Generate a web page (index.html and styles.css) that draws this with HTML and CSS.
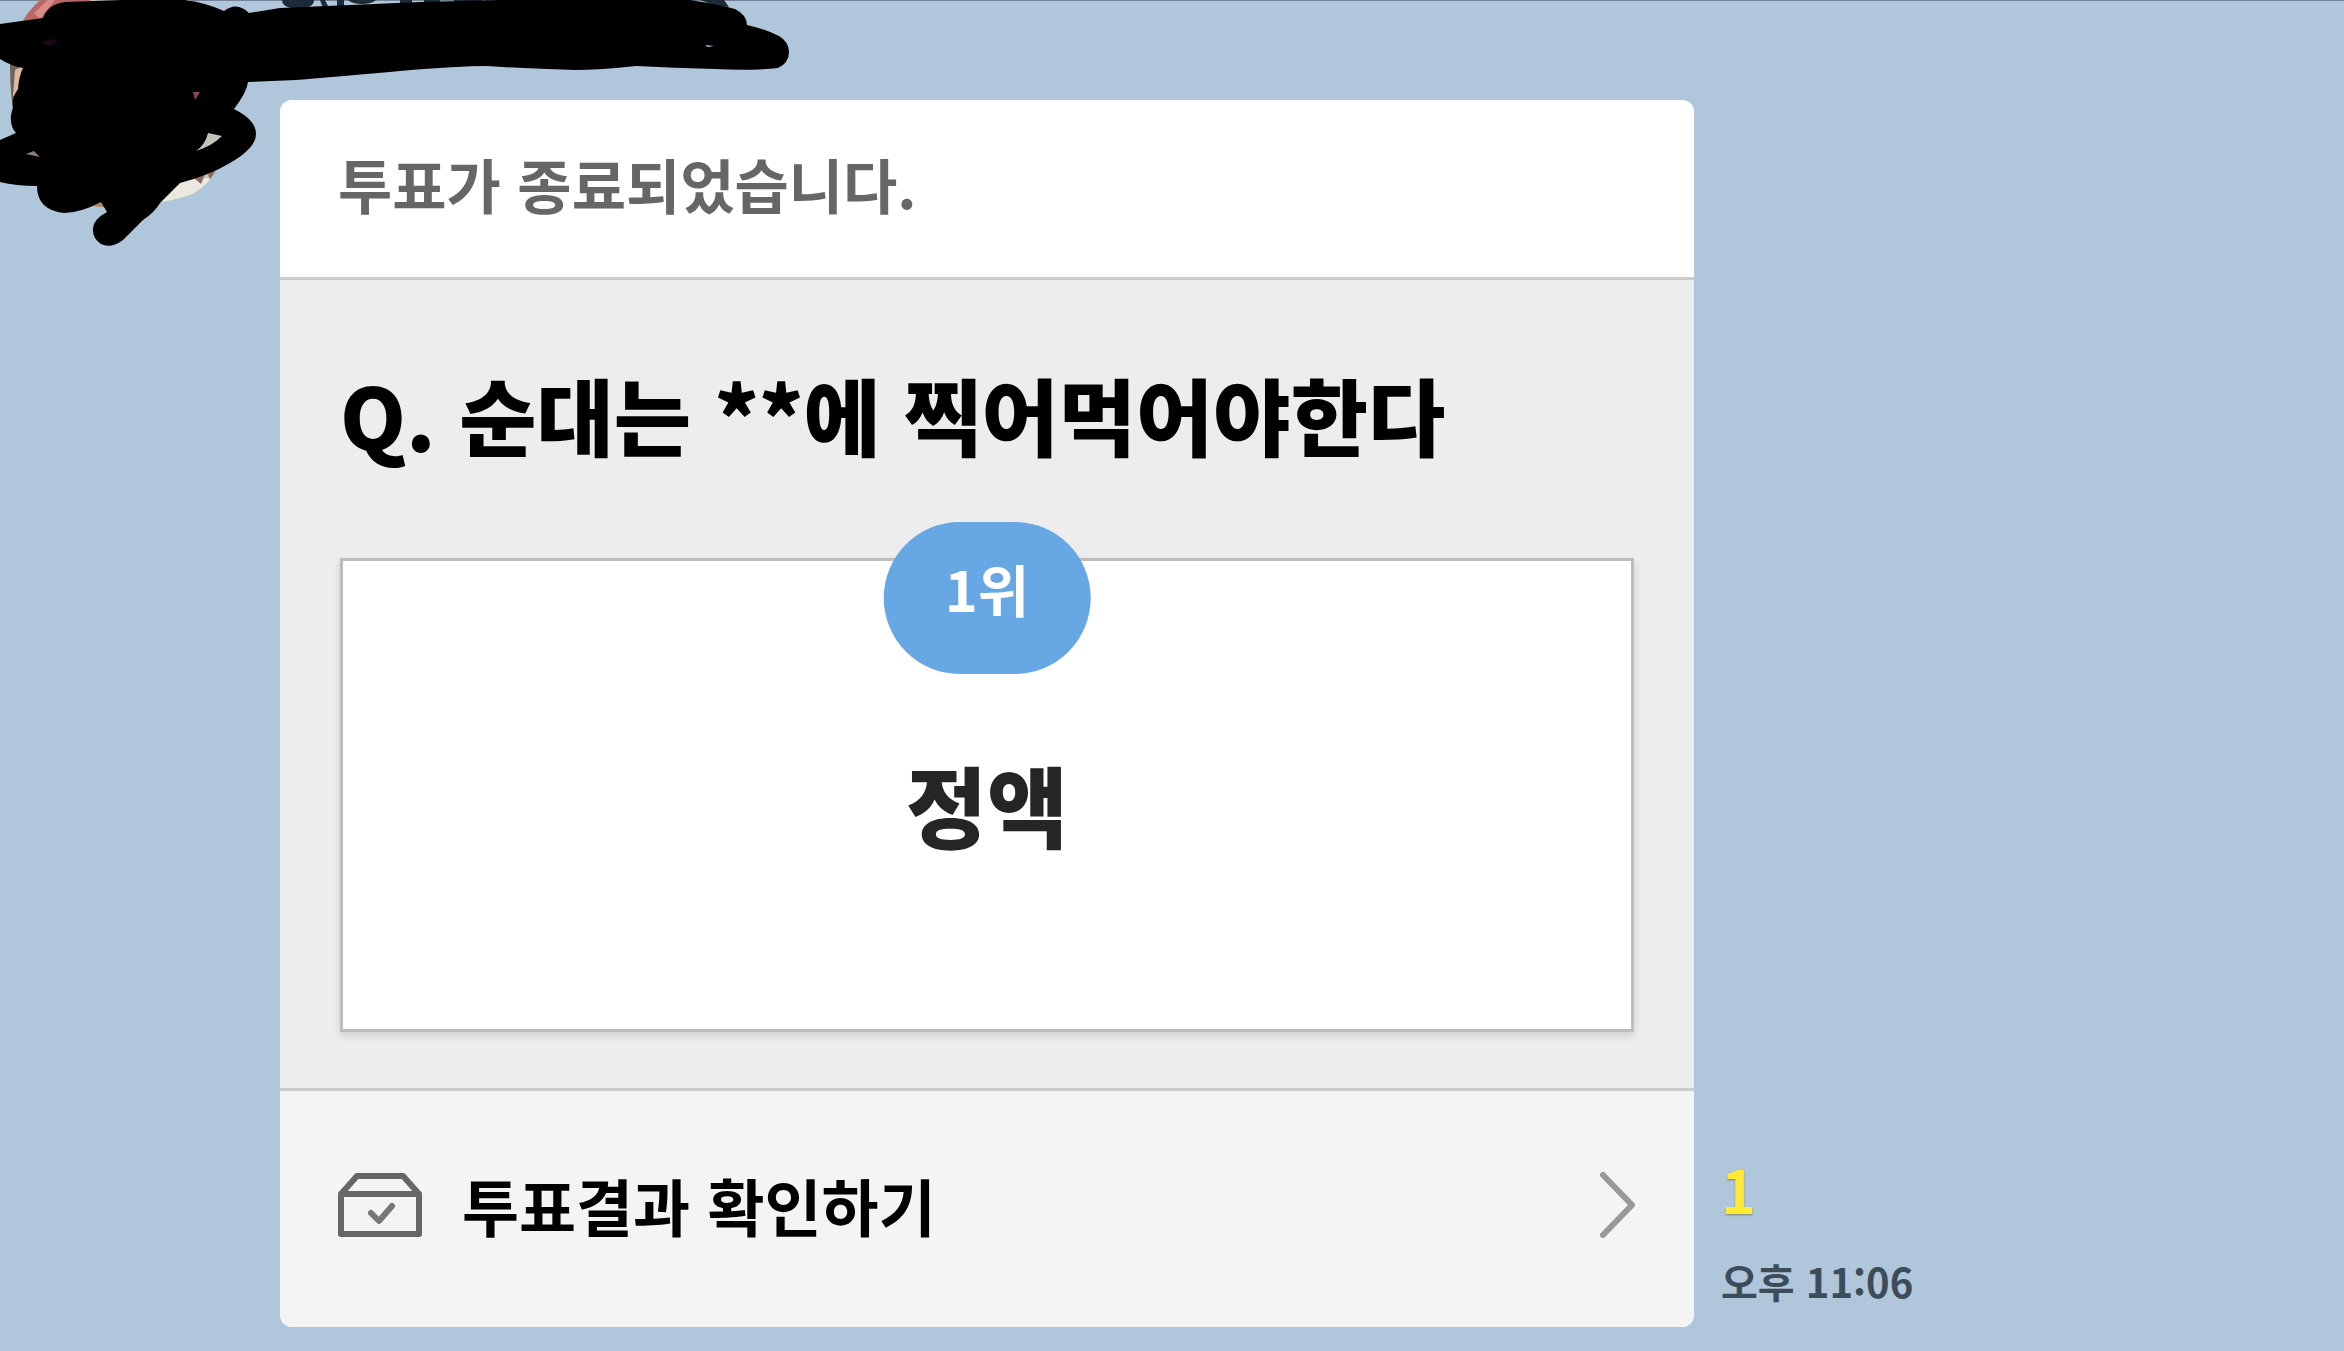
FILE: index.html
```
<!DOCTYPE html>
<html lang="ko">
<head>
<meta charset="UTF-8" />
<meta name="viewport" content="width=device-width, initial-scale=1" />
<title>투표</title>
<link rel="stylesheet" href="styles.css">
</head>
<body>

<main class="chat">
  <article class="card">
    <header class="card-header">투표가 종료되었습니다.</header>

    <section class="card-body">
      <h1 class="question">Q. 순대는 **에 찍어먹어야한다</h1>
      <div class="result">
        <span class="badge">1위</span>
        <p class="answer">정액</p>
      </div>
    </section>

    <a class="card-link" href="#">
      <svg class="icon-box" viewBox="0 0 84 66" aria-hidden="true">
        <path d="M3 22 L19 4 H65 L81 22 V62 H3 Z M3 22 H81" />
        <path class="check" d="M33 41 L41 49 L54 34" />
      </svg>
      <span class="link-text">투표결과 확인하기</span>
      <svg class="icon-arrow" viewBox="0 0 36 66" aria-hidden="true">
        <path d="M3 3 L32 33 L3 63" />
      </svg>
    </a>
  </article>

  <div class="meta">
    <span class="unread">1</span>
    <time class="time">오후 11:06</time>
  </div>
</main>

<!-- foto y nombre tachados -->
<svg class="scribble" viewBox="0 0 800 260" aria-hidden="true">
  <defs>
    <clipPath id="avatar"><path d="M10 65 Q12 25 40 0 H190 Q222 40 222 120 V155 Q214 184 190 195 Q140 211 90 206 Q10 190 10 65 Z" /></clipPath>
  </defs>
  <g clip-path="url(#avatar)">
    <rect width="230" height="210" fill="#c5c3b9" />
    <path d="M20 0 H90 V26 H20 Z" fill="#b8686a" />
    <path d="M34 13 L48 0 H55 L40 19 Z" fill="#d98b86" />
    <path d="M8 62 H26 V140 H8 Z" fill="#6e625c" />
    <path d="M15 70 L24 65 V92 L13 96 Z" fill="#dfb99d" />
    <path d="M36 36 H60 V50 H36 Z" fill="#1c0717" />
    <path d="M190 88 H202 V104 H190 Z" fill="#8c4a50" />
    <path d="M24 148 H44 V160 H24 Z" fill="#8a7c7e" />
    <path d="M150 178 H230 V210 H130 Z" fill="#ebe9df" />
    <path d="M194 178 L206 172 L201 184 Z M208 174 L216 170 L210 180 Z" fill="#8a6a62" />
    <path d="M86 200 H106 V208 H86 Z" fill="#a98b62" />
  </g>
  <path d="M282 0 H314 Q314 8 298 9 Q282 8 282 0 Z M320 0 H325 L329 8 H323 Z M337 0 H344 V8 H337 Z M348 0 H376 Q372 4 362 4 Q352 4 348 0 Z M400 0 H412 V3 H400 Z M424 0 H440 V3 H424 Z M454 0 H482 V3 H454 Z M700 0 H724 L729 7 L716 6 Z" fill="#1d2b38" />
  <path fill-rule="evenodd" d="M0 24 L43 18 Q48 4 65 2 L122 0 H185 Q207 3 224 11 Q237 1 249 13 L280 8 L420 2 L500 0 H690 Q716 4 735 9 Q747 15 747 25 Q765 29 779 36 Q789 42 789 52 Q789 63 778 68 Q750 71 715 69 Q675 68 636 66 Q600 70 575 70 Q530 69 487 66 Q458 66 400 71 Q335 77 296 80 L248 82 Q247 92 234 109 Q256 120 256 134 Q256 148 230 163 Q210 175 180 183 L160 203 Q155 212 143 220 L123 240 Q111 249 101 244 Q92 238 93 228 Q94 219 107 212 L101 202 Q80 213 64 213 Q37 210 37 186 Q16 186 0 182 V140 L16 133 Q10 127 11 115 L13 107 Q11 99 18 89 Q19 76 23 68 Q11 66 0 59 Z
    M40 42 L56 39 L57 43 L50 46 Z M193 92 H200 L195 100 Z M208 133 L222 136 Q212 146 196 151 Q205 145 208 133 Z M26 154 L34 151 L40 157 Z M705 45 L714 46 L708 47 Z" />
</svg>

</body>
</html>
```

FILE: styles.css
```
* { box-sizing: border-box; }
body {
  font-family: "Noto Sans CJK KR", sans-serif; margin: 0; background: #b0c6da;
  border-top: 1px solid #748496;
}
.chat { display: flex; align-items: flex-end; gap: 27px; padding: 99px 24px 24px 280px; }

.card { flex: 0 1 1414px; border-radius: 12px; overflow: hidden; background: #ededed; }
.card-header {
  background: white; color: #666; border-bottom: 3px solid #cbcbcb;
  padding: 40px 58px 49px; font-size: 59px; line-height: 88px; font-weight: bold;
}
.card-body { padding: 74px 60px 56px; }
.question { margin: 0 0 84px; font-size: 84px; line-height: 120px; font-weight: 900; color: black; }
.result {
  position: relative; background: white; border: 3px solid #bdbdbd;
  padding: 182px 20px 166px; text-align: center; box-shadow: 0 4px 8px rgba(0, 0, 0, 0.12);
}
.badge {
  position: absolute; top: -39px; left: 50%; transform: translateX(-50%);
  padding: 26px 61px 46px; border-radius: 76px; background: #66a7e4; color: white;
  font-size: 56px; line-height: 80px; font-weight: bold; white-space: nowrap;
}
.answer { margin: 0; font-size: 88px; line-height: 120px; font-weight: 900; color: #252525; }

.card-link {
  display: flex; align-items: center; padding: 68px 58px 76px; background: #f4f4f4;
  border-top: 3px solid #cbcbcb; color: black; text-decoration: none;
}
.card-link svg { fill: none; stroke-linecap: round; stroke-linejoin: round; }
.icon-box { width: 84px; height: 66px; stroke: #666; stroke-width: 6; }
.icon-box .check { stroke: #777; }
.link-text { flex: 1; margin-left: 40px; font-size: 62px; line-height: 92px; font-weight: bold; }
.icon-arrow { width: 36px; height: 66px; stroke: #999; stroke-width: 6; }

.meta { display: flex; flex-direction: column; gap: 32px; padding-bottom: 16px; line-height: 60px; white-space: nowrap; }
.unread { color: #ffeb33; font-size: 59px; font-weight: bold; text-shadow: 0 1px 2px rgba(90, 90, 40, 0.6); }
.time { color: #3d4c59; font-size: 40px; font-weight: bold; }

.scribble { position: absolute; top: 0; left: 0; width: 800px; height: 260px; pointer-events: none; }
```
